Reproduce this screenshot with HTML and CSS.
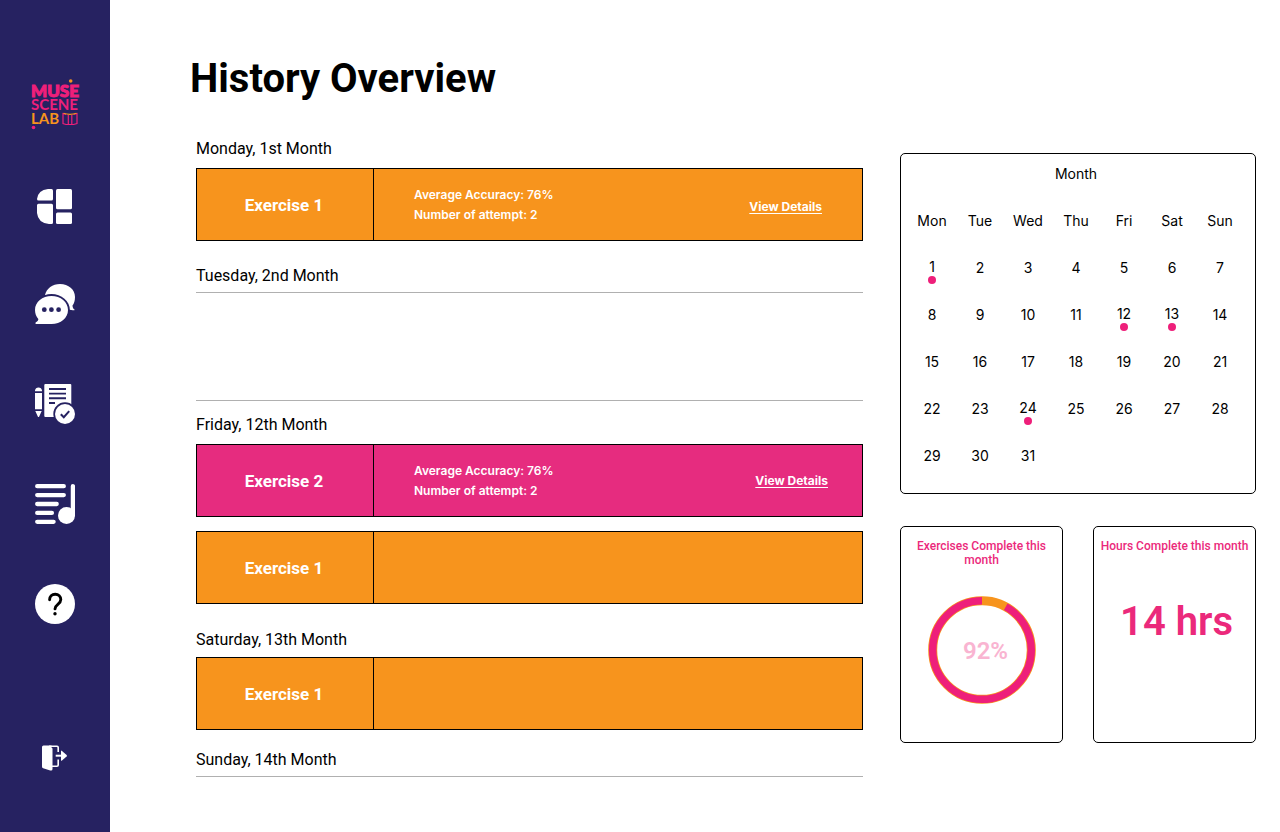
FILE: index.html
```html
<!DOCTYPE html>
<html lang="en">
<head>
<meta charset="utf-8">
<meta name="viewport" content="width=device-width, initial-scale=1">
<title>History Overview</title>
<link rel="stylesheet" href="styles.css">
</head>
<body>
<div class="app">
  <aside class="sidebar">
    <a class="logo" href="#" aria-label="Muse Scene Lab">
      <svg width="50" height="52" viewBox="0 0 50 52">
        <text><tspan class="logo-muse" x="1" y="18">MUSE</tspan><tspan class="logo-scene" x="1" y="31">SCENE</tspan><tspan class="logo-lab" x="1" y="45">LAB</tspan></text>
        <circle cx="40.700" cy="2" r="1.800" fill="#f7941d"/>
        <circle cx="3.500" cy="48.500" r="1.800" fill="#ee1f7a"/>
        <path d="M36 35.500L33 34.500V44.500L36 45.500h7.500l3.500-1V34.500l-3.500 1M38.300 36v9.500M41.800 36v9.500" fill="none" stroke="#ee1f7a" stroke-width="1.200"/>
        <path d="M33.500 34.300q6.500 2 13 0" fill="none" stroke="#f7941d" stroke-width="1.200"/>
      </svg>
    </a>
    <nav class="nav">
      <a href="#" aria-label="Dashboard">
        <svg width="36" height="35" viewBox="0 0 36 35" fill="#fff">
          <path d="M11 0h3.500q1.500 0 1.500 1.500v8.600q0 1.500-1.500 1.500H1.500Q0 11.600 0 10.100Q1 1 11 0z"/>
          <path d="M1.500 14.700h13q1.500 0 1.500 1.500v17.300q0 1.500-1.500 1.500H12Q1 34 0 24v-7.800q0-1.500 1.500-1.500z"/>
          <rect x="19" y="0" width="16" height="20.300" rx="1.500"/>
          <rect x="19" y="23.400" width="16" height="11.600" rx="1.500"/>
        </svg>
      </a>
      <a href="#" aria-label="Messages">
        <svg width="40" height="40" viewBox="0 0 40 40">
          <path d="M25 0C33.500 0 40 5.500 40 13c0 4-1 6.500-2.500 8.500 0 2 1 3.500 2.500 4.500-3 .5-6 0-8-1.500L10 11C11.500 4.500 17.500 0 25 0z" fill="#fff"/>
          <ellipse cx="16.500" cy="25.700" rx="18.300" ry="15.600" fill="#262261"/>
          <path d="M16.500 12C25.700 12 33 18 33 26s-7.300 14-16.500 14H1c-1-.5-.8-1.200 0-1.700 1.500-1 2.500-2.200 2.300-3.300C1.200 32.500 0 29.500 0 26 0 18 7.400 12 16.500 12z" fill="#fff"/>
          <g fill="#262261"><circle cx="9.300" cy="25.700" r="2.400"/><circle cx="16.400" cy="25.700" r="2.400"/><circle cx="23.600" cy="25.700" r="2.400"/></g>
        </svg>
      </a>
      <a href="#" aria-label="Exercises">
        <svg width="40" height="40" viewBox="0 0 40 40">
          <path d="M0 7.300V6.500Q.5 3.500 3.500 3.500T7 6.500v.8zM0 9h7v16.300H0zM.3 27h6.400L4.200 32.500q-.7 1.200-1.400 0z" fill="#fff"/>
          <path d="M10.300 0h25q1 0 1 1v32h-26q-1 0-1-1V1q0-1 1-1z" fill="#fff"/>
          <path d="M14 5h17M14 9.600h17M14 14.200h17M14 19h6" stroke="#262261" stroke-width="1.900"/>
          <circle cx="30" cy="30" r="11.700" fill="#262261"/>
          <circle cx="30" cy="30" r="10" fill="#fff"/>
          <path d="M25.800 30.200l3 3 5.400-6" fill="none" stroke="#262261" stroke-width="2"/>
        </svg>
      </a>
      <a href="#" aria-label="Music">
        <svg width="40" height="40" viewBox="0 0 40 40">
          <path d="M2.200 2.200h26.600M2.200 11.100h26.600M2.200 20h19.500M2.200 28.900h14.700M2.200 37.800h16.400M37.900 2.200V31" stroke="#fff" stroke-width="4.300" stroke-linecap="round"/>
          <circle cx="31.500" cy="31.500" r="8.500" fill="#fff"/>
        </svg>
      </a>
      <a href="#" aria-label="Help">
        <svg width="40" height="40" viewBox="0 0 40 40">
          <circle cx="20" cy="20" r="20" fill="#fff"/>
          <path d="M14.600 15.700c0-3.200 2.300-5.500 5.600-5.500s5.600 2.200 5.600 5.400c0 4.800-5.800 4.700-5.800 9.300" fill="none" stroke="#000" stroke-width="2.900" stroke-linecap="round"/>
          <circle cx="20" cy="29.800" r="1.700"/>
        </svg>
      </a>
    </nav>
    <a class="logout" href="#" aria-label="Log out">
      <svg width="26" height="26" viewBox="0 0 26 26">
        <path d="M1.500.5H9.500V2.500L10.500 3.500V24q0 2-2.300 1.400L1.200 23.300Q0 22.900 0 21.500V2Q0 .5 1.500.5z" fill="#fff"/>
        <path d="M7 1.200h8q1.200 0 1.200 1.300V7M16.200 14.500V20q0 1.200-1.200 1.200h-5" fill="none" stroke="#fff" stroke-width="1.600"/>
        <path d="M13.700 10.700H20" stroke="#fff" stroke-width="2"/>
        <path d="M19 6.200q.2-1 1-.3l4.600 4.100q.7.700 0 1.400L20 15.600q-.8.600-1-.3z" fill="#fff"/>
      </svg>
    </a>
  </aside>

  <main class="main">
    <h1 class="title">History Overview</h1>
    <div class="columns">
      <div class="history">
        <section class="day">
          <h2 class="date">Monday, 1st Month</h2>
          <article class="exercise">
            <h3 class="exercise-name">Exercise 1</h3>
            <div class="exercise-body">
              <div class="facts"><p>Average Accuracy: 76%</p><p>Number of attempt: 2</p></div>
              <a class="details" href="#">View Details</a>
            </div>
          </article>
        </section>
        <section class="day day-empty">
          <h2 class="date">Tuesday, 2nd Month</h2>
          <div class="blank"></div>
        </section>
        <section class="day">
          <h2 class="date">Friday, 12th Month</h2>
          <article class="exercise exercise-pink">
            <h3 class="exercise-name">Exercise 2</h3>
            <div class="exercise-body">
              <div class="facts"><p>Average Accuracy: 76%</p><p>Number of attempt: 2</p></div>
              <a class="details" href="#">View Details</a>
            </div>
          </article>
          <article class="exercise">
            <h3 class="exercise-name">Exercise 1</h3>
            <div class="exercise-body"></div>
          </article>
        </section>
        <section class="day day-weekend">
          <h2 class="date">Saturday, 13th Month</h2>
          <article class="exercise">
            <h3 class="exercise-name">Exercise 1</h3>
            <div class="exercise-body"></div>
          </article>
        </section>
        <section class="day day-last">
          <h2 class="date">Sunday, 14th Month</h2>
        </section>
      </div>

      <div class="summary">
        <div class="calendar">
          <table class="month">
            <caption>Month</caption>
            <thead>
              <tr><th>Mon</th><th>Tue</th><th>Wed</th><th>Thu</th><th>Fri</th><th>Sat</th><th>Sun</th></tr>
            </thead>
            <tbody>
              <tr><td class="marked">1</td><td>2</td><td>3</td><td>4</td><td>5</td><td>6</td><td>7</td></tr>
              <tr><td>8</td><td>9</td><td>10</td><td>11</td><td class="marked">12</td><td class="marked">13</td><td>14</td></tr>
              <tr><td>15</td><td>16</td><td>17</td><td>18</td><td>19</td><td>20</td><td>21</td></tr>
              <tr><td>22</td><td>23</td><td class="marked">24</td><td>25</td><td>26</td><td>27</td><td>28</td></tr>
              <tr><td>29</td><td>30</td><td>31</td><td></td><td></td><td></td><td></td></tr>
            </tbody>
          </table>
        </div>
        <div class="stats">
          <section class="stat">
            <h2 class="stat-title">Exercises Complete this month</h2>
            <div class="ring">
              <svg width="108" height="108" viewBox="0 0 108 108">
                <circle cx="54" cy="54" r="49.300" fill="none" stroke="#f7941d" stroke-width="9"/>
                <circle cx="54" cy="54" r="49.300" fill="none" stroke="#ee1f7a" stroke-width="7.400" pathLength="100" stroke-dasharray="92 8" stroke-dashoffset="-8" transform="rotate(-90 54 54)"/>
              </svg>
              <span class="ring-value">92%</span>
            </div>
          </section>
          <section class="stat">
            <h2 class="stat-title">Hours Complete this month</h2>
            <p class="hours">14 hrs</p>
          </section>
        </div>
      </div>
    </div>
  </main>
</div>
</body>
</html>
```
FILE: styles.css
```css
* { box-sizing: border-box; }

body {
  margin: 0;
  background: #fff;
  color: #000;
  font-family: Roboto, "Liberation Sans", sans-serif;
}

h1, h2, h3, p { margin: 0; }

svg { display: block; }

.app { display: flex; min-height: 100vh; }

/* Sidebar */
.sidebar {
  flex: 0 0 110px;
  display: flex;
  flex-direction: column;
  align-items: center;
  padding: 79px 0 61px;
  background: #262261;
}

.nav {
  display: flex;
  flex-direction: column;
  align-items: center;
  gap: 60px;
  margin-top: 58px;
}

.logout { margin-top: auto; }

.logo-muse, .logo-scene { fill: #ee1f7a; stroke: #ee1f7a; }
.logo-muse { font: 900 17px Lato, sans-serif; stroke-width: 1px; }
.logo-scene { font: 700 15px Lato, sans-serif; stroke-width: 0; }
.logo-lab { font: 700 15px Lato, sans-serif; fill: #f7941d; }

/* Main area */
.main { flex: 1; min-width: 0; padding: 55px 24px 40px 80px; }

.title { font-size: 40px; line-height: 48px; font-weight: 700; }

.columns {
  display: grid;
  grid-template-columns: minmax(0, 667fr) minmax(0, 356fr);
  gap: 37px;
  align-items: start;
  padding-left: 6px;
}

/* History list */
.history { padding-top: 36px; }

.date {
  margin-bottom: 9px;
  font-size: 16px;
  line-height: 20px;
  font-weight: 400;
}

.day { margin-bottom: 25px; }
.day-empty { margin-bottom: 14px; }
.day-empty .date, .day-last .date { margin-bottom: 6px; }
.day-weekend { margin: 26px 0 20px; }
.day-weekend .date { margin-bottom: 7px; }
.day-last { margin-bottom: 0; border-bottom: 1px solid #b0b0b0; }

.blank {
  height: 109px;
  border: solid #b0b0b0;
  border-width: 1px 0;
}

.exercise {
  display: flex;
  min-height: 73px;
  border: 1px solid #000;
  background: #f7941d;
  color: #fff;
}

.exercise + .exercise { margin-top: 14px; }
.exercise-pink { background: #e62c7f; }

.exercise-name {
  flex: 0 0 177px;
  display: flex;
  align-items: center;
  justify-content: center;
  padding-right: 2px;
  border-right: 1px solid #000;
  font-size: 17px;
  line-height: 20px;
  font-weight: 700;
}

.exercise-body {
  flex: 1;
  display: flex;
  align-items: center;
  justify-content: space-between;
  padding: 0 40px;
  font: 600 12px/20px Inter, sans-serif;
}

.details {
  padding-top: 4px;
  color: inherit;
  font-weight: 700;
  text-underline-offset: 2px;
}

.exercise-pink .exercise-body { padding-right: 34px; }
.exercise-pink .details { padding-top: 0; }

/* Calendar */
.summary {
  display: flex;
  flex-direction: column;
  gap: 32px;
  padding-top: 50px;
}

.calendar, .stat {
  border: 1px solid #000;
  border-radius: 5px;
}

.calendar { padding: 0 11px 14px 7px; }

.month {
  width: 100%;
  table-layout: fixed;
  border-collapse: collapse;
  font: 400 14px/20px Inter, sans-serif;
}

.month caption { padding: 10px 0 13px; }
.month th, .month td {
  height: 47px;
  padding: 0;
  font-weight: 400;
  text-align: center;
}

.month .marked { position: relative; padding-bottom: 2px; }
.month .marked::after {
  content: "";
  position: absolute;
  left: calc(50% - 4px);
  bottom: 7px;
  width: 8px;
  height: 8px;
  border-radius: 50%;
  background: #ee1f7a;
}

/* Totals */
.stats { display: grid; grid-template-columns: 1fr 1fr; gap: 30px; }

.stat {
  min-height: 217px;
  padding: 12px 4px;
  color: #eb297b;
  text-align: center;
}

.stat-title { font-size: 12px; line-height: 14px; font-weight: 500; }

.ring {
  display: grid;
  place-items: center;
  margin-top: 29px;
}

.ring > * { grid-area: 1 / 1; }

.ring-value {
  padding: 2px 0 0 8px;
  color: #f9b4d1;
  font-size: 24px;
  line-height: 28px;
  font-weight: 600;
}

.hours {
  margin-top: 45px;
  padding-left: 4px;
  font-size: 40px;
  line-height: 48px;
  font-weight: 600;
}
```
